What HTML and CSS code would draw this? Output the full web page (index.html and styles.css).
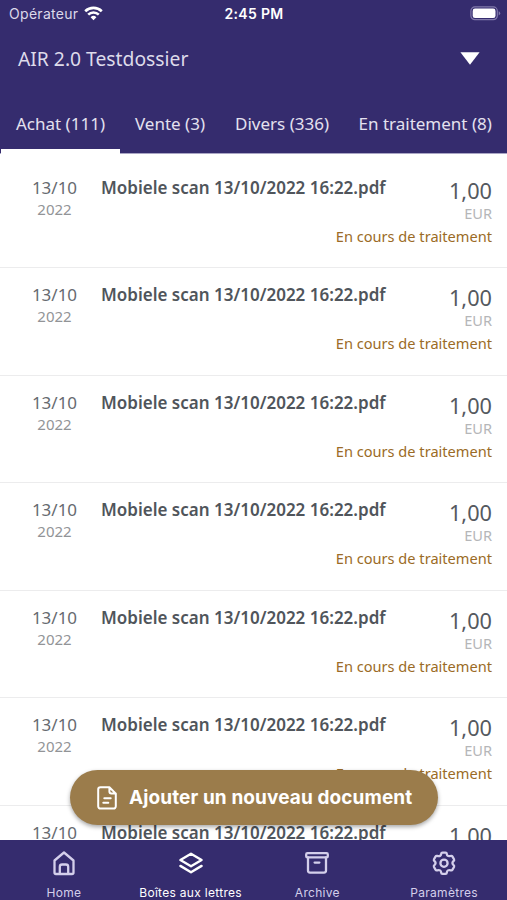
FILE: index.html
```html
<!DOCTYPE html>
<html lang="fr">
<head>
<meta charset="utf-8">
<title>Boîtes aux lettres</title>
<link rel="stylesheet" href="styles.css">
</head>
<body>
<div class="app">
  <header class="header">
    <div class="status">
      <div class="carrier"><span>Opérateur</span>
        <svg class="wifi" width="19" height="15" viewBox="0 0 19 15" fill="none" stroke="#fff" stroke-width="2.6"><path d="M1.200 5.200a12 12 0 0 1 16.600 0M4.200 8.600a7.600 7.600 0 0 1 10.600 0"/><path d="M9.500 14.200 6.600 11.300a4.100 4.100 0 0 1 5.800 0z" fill="#fff" stroke="none"/></svg>
      </div>
      <div class="clock">2:45 PM</div>
      <svg class="battery" width="31" height="15" viewBox="0 0 31 15"><rect x=".9" y=".9" width="26.400" height="12.800" rx="4" fill="none" stroke="#8179ab" stroke-width="1.200"/><rect x="2.700" y="2.600" width="22.800" height="9.400" rx="2.300" fill="#fff"/><path d="M28.700 5.200q1.500.6 1.500 2.100t-1.500 2.100z" fill="#8179ab"/></svg>
    </div>
    <div class="dossier"><span>AIR 2.0 Testdossier</span>
      <svg width="20" height="13" viewBox="0 0 20 13"><path d="M.4.2h19.200L10 12.800z" fill="#fff"/></svg>
    </div>
    <nav class="tabs">
      <a class="tab active">Achat (111)</a><a class="tab">Vente (3)</a><a class="tab">Divers (336)</a><a class="tab">En traitement (8)</a>
    </nav>
  </header>
  <main class="list" id="list"></main>
  <button class="add">
    <svg width="20" height="24" viewBox="0 0 20 24" fill="none" stroke="#fff" stroke-width="2" stroke-linecap="round" stroke-linejoin="round"><path d="M12.400 1.200H3.500a2.300 2.300 0 0 0-2.300 2.300v16.800a2.300 2.300 0 0 0 2.300 2.300h13a2.300 2.300 0 0 0 2.300-2.300V7.600zM12.400 1.200v4.400a2 2 0 0 0 2 2h4.400M7.300 12.200h6.400M6.300 16.700h5"/></svg>
    <span>Ajouter un nouveau document</span>
  </button>
  <nav class="bar">
    <a class="item"><svg width="26" height="26" viewBox="0 0 26 26" fill="none" stroke="currentColor" stroke-width="2.300" stroke-linejoin="round"><path d="M3.500 10.500 13 2.500l9.500 8v12a1.500 1.500 0 0 1-1.500 1.500H5a1.500 1.500 0 0 1-1.500-1.500zM8.800 24v-7.200a2.300 2.300 0 0 1 2.300-2.300h3.800a2.300 2.300 0 0 1 2.300 2.300V24"/></svg><span>Home</span></a>
    <a class="item current"><svg width="26" height="26" viewBox="0 0 26 26" fill="none" stroke="currentColor" stroke-width="2.400" stroke-linejoin="round" stroke-linecap="round"><path d="M13 3.700 23.600 10 13 16.300 2.400 10zM2.400 15.900 13 22.200l10.600-6.300"/></svg><span>Boîtes aux lettres</span></a>
    <a class="item"><svg width="26" height="26" viewBox="0 0 26 26" fill="none" stroke="currentColor" stroke-width="2.300" stroke-linejoin="round" stroke-linecap="round"><rect x="2.200" y="3.200" width="21.600" height="4.200" rx="1.200"/><path d="M4 7.400v13.200a2 2 0 0 0 2 2h14a2 2 0 0 0 2-2V7.400M10.600 12.600h4.800"/></svg><span>Archive</span></a>
    <a class="item"><svg width="26" height="26" viewBox="0 0 26 26" fill="none" stroke="currentColor" stroke-width="2.300" stroke-linejoin="round"><path d="M11.500 2.600h3a1.300 1.300 0 0 1 1.300 1.200q.2 2.600 2.600 2.400l1.400-.3a1.500 1.500 0 0 1 1.700.7l1.500 2.600a1.500 1.500 0 0 1-.4 1.800q-2.400 2 0 4.200a1.500 1.500 0 0 1 .4 1.800l-1.500 2.600a1.500 1.500 0 0 1-1.700.7q-3.700-1-4 2.300a1.300 1.300 0 0 1-1.300 1.200h-3a1.300 1.300 0 0 1-1.300-1.200q-.3-3.300-4-2.300a1.500 1.500 0 0 1-1.700-.7L3 17a1.500 1.500 0 0 1 .4-1.800q2.400-2.200 0-4.200A1.500 1.500 0 0 1 3 9.200l1.500-2.600a1.500 1.500 0 0 1 1.700-.7q3.700 1 4-2.100a1.300 1.300 0 0 1 1.300-1.200z"/><circle cx="13" cy="13.200" r="3.600"/></svg><span>Paramètres</span></a>
  </nav>
</div>
<script src="app.js"></script>
</body>
</html>
```
FILE: styles.css
```css
* { box-sizing: border-box; }
body { margin: 0; font-family: "Noto Sans", sans-serif; background: #fff; }
.app { position: relative; width: 507px; height: 900px; overflow: hidden; display: flex; flex-direction: column; }
.header { height: 154px; flex: none; background: #352c6e; color: #e4e1ef; border-bottom: 1px solid #aaa6c5; display: flex; flex-direction: column; }
.status { height: 27px; padding: 0 6px 0 9px; display: grid; grid-template-columns: 1fr auto 1fr; align-items: center; font-family: Inter, sans-serif; font-size: 14px; }
.carrier { display: flex; align-items: center; gap: 6px; color: #dcd9ea; letter-spacing: .3px; }
.clock { font-weight: 600; color: #fff; letter-spacing: .35px; margin-right: 2px; }
.battery { justify-self: end; }
.dossier { height: 63px; padding: 0 27px 0 18px; display: flex; align-items: center; justify-content: space-between; font-size: 19.3px; color: #dedbea; }
.tabs { display: flex; flex: 1; padding-left: 1px; }
.tab { flex: none; padding: 21px 15px 0; font-size: 17px; line-height: 26px; white-space: nowrap; }
.tab:last-child { margin-left: -.5px; }
.active { border-bottom: 5px solid #fff; margin-bottom: -1px; }
.list { flex: 1; min-height: 0; overflow: hidden; padding-top: 6.5px; }
.row { height: 107.5px; border-bottom: 1px solid #ececed; display: grid; grid-template-columns: 79px 1fr auto; padding: 15.4px 15px 0 15px; }
.date { text-align: center; color: #666a70; font-size: 17px; line-height: 23px; }
.date small { display: block; font-size: 15px; line-height: 21px; color: #929497; }
.name { padding-left: 7px; color: #50555b; font-weight: 600; font-size: 17px; line-height: 23px; white-space: nowrap; }
.right { width: 60px; display: flex; flex-direction: column; align-items: flex-end; white-space: nowrap; }
.amount { text-align: right; color: #55595f; font-size: 21.7px; line-height: 29px; }
.amount small { display: block; font-size: 14.6px; line-height: 17px; color: #b5b6b8; }
.state { color: #9b6b26; font-size: 14.6px; line-height: 28px; }
.add { position: absolute; left: 70px; top: 770px; width: 368px; height: 55px; border: 0; border-radius: 28px; background: #9b7c4b; color: #fff; box-shadow: 0 2px 4px rgba(0,0,0,.35); display: flex; align-items: center; gap: 12px; padding: 0 0 0 27px; font: 700 19px Inter, sans-serif; letter-spacing: .1px; white-space: nowrap; }
.bar { height: 60px; flex: none; display: grid; grid-template-columns: repeat(4, 1fr); background: #352c6e; color: #d4cfeb; }
.item { display: flex; flex-direction: column; align-items: center; padding: 10px 0 0 1px; font: 12px/16px Inter, sans-serif; letter-spacing: .3px; gap: 9px; }
.current { color: #fff; }
```
FILE: app.js
```js
const row = `<article class="row">
  <div class="date">13/10<small>2022</small></div>
  <div class="name">Mobiele scan 13/10/2022 16:22.pdf</div>
  <div class="right"><div class="amount">1,00<small>EUR</small></div><span class="state">En cours de traitement</span></div>
</article>`;
document.getElementById("list").innerHTML = row.repeat(7);
```
